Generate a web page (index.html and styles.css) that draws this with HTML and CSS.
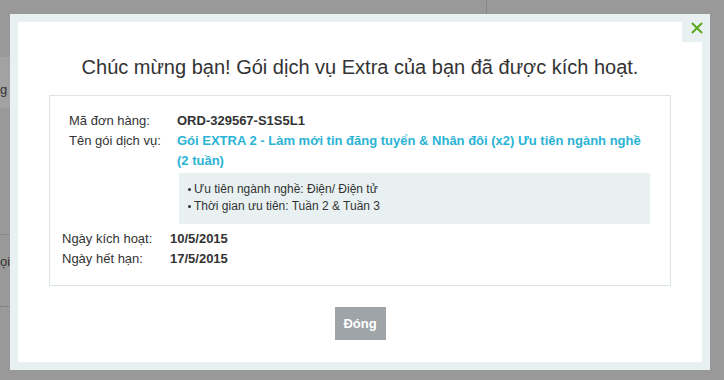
FILE: index.html
```html
<!DOCTYPE html>
<html lang="vi">
<head>
<meta charset="utf-8">
<link rel="stylesheet" href="styles.css">
</head>
<body>
<div class="page">
  <div class="page-tab"><span>g</span></div>
  <div class="page-rule"></div>
  <div class="page-text">ọi</div>
  <div class="page-dots"></div>
  <div class="page-vline"></div>
</div>

<div class="modal">
  <button class="close" aria-label="Đóng">
    <svg width="14" height="14" viewBox="0 0 14 14"><path d="M2 2 L12 12 M12 2 L2 12" stroke="#5aa81c" stroke-width="2" fill="none"/></svg>
  </button>
  <div class="modal-body">
    <h1 class="title">Chúc mừng bạn! Gói dịch vụ Extra của bạn đã được kích hoạt.</h1>
    <div class="info">
      <div class="group group-a">
        <div class="row">
          <div class="label">Mã đơn hàng:</div>
          <div class="value">ORD-329567-S1S5L1</div>
        </div>
        <div class="row">
          <div class="label">Tên gói dịch vụ:</div>
          <div class="value">
            <div class="pkg">Gói EXTRA 2 - Làm mới tin đăng tuyển &amp; Nhân đôi (x2) Ưu tiên ngành nghề (2 tuần)</div>
            <ul class="details">
              <li>Ưu tiên ngành nghề: Điện/ Điện tử</li>
              <li>Thời gian ưu tiên: Tuần 2 &amp; Tuần 3</li>
            </ul>
          </div>
        </div>
      </div>
      <div class="group group-b">
        <div class="row">
          <div class="label">Ngày kích hoạt:</div>
          <div class="value">10/5/2015</div>
        </div>
        <div class="row">
          <div class="label">Ngày hết hạn:</div>
          <div class="value">17/5/2015</div>
        </div>
      </div>
    </div>
    <div class="actions">
      <button class="btn">Đóng</button>
    </div>
  </div>
</div>
</body>
</html>
```

FILE: styles.css
```css
html, body {
  margin: 0;
  padding: 0;
}
body {
  width: 724px;
  height: 380px;
  background: #999999;
  font-family: "Liberation Sans", Arial, sans-serif;
  color: #333;
  position: relative;
  overflow: hidden;
}

/* dimmed page behind the overlay */
.page {
  position: absolute;
  inset: 0;
}
.page-tab {
  position: absolute;
  left: 0;
  top: 57px;
  width: 12px;
  height: 51px;
  background: #a2a2a2;
  font-size: 13px;
  color: #333;
}
.page-tab span {
  position: absolute;
  left: 0;
  top: 25px;
}
.page-rule {
  position: absolute;
  left: 0;
  top: 234px;
  width: 12px;
  height: 1px;
  background: #8a8a8a;
}
.page-text {
  position: absolute;
  left: 0;
  top: 254px;
  width: 10px;
  overflow: hidden;
  font-size: 13px;
  color: #333;
}
.page-dots {
  position: absolute;
  left: 0;
  top: 306px;
  width: 12px;
  border-top: 1px dotted #777;
}
.page-vline {
  position: absolute;
  left: 486px;
  top: 0;
  width: 1px;
  height: 14px;
  background: #888;
}

/* modal */
.modal {
  position: absolute;
  left: 10px;
  top: 14px;
  width: 700px;
  height: 356px;
  box-sizing: border-box;
  border: 8px solid #e8f0f2;
  background: #fff;
}
.close {
  position: absolute;
  right: -8px;
  top: -8px;
  width: 28px;
  height: 28px;
  border: 0;
  padding: 0;
  background: #e8f0f2;
  display: flex;
  align-items: center;
  justify-content: center;
  cursor: pointer;
}
.close svg {
  display: block;
  margin: -1px 0 0 1px;
}
.modal-body {
  padding: 33px 31px 0;
}
.title {
  margin: 0;
  font-size: 20px;
  font-weight: normal;
  line-height: 24px;
  text-align: center;
  color: #333;
}
.info {
  margin-top: 16px;
  border: 1px solid #dbe4e6;
  height: 191px;
  box-sizing: border-box;
  padding: 15px 20px 0 0;
  font-size: 13px;
}
.group-a {
  padding-left: 19px;
}
.group-b {
  padding-left: 12px;
  margin-top: 5px;
}
.row {
  display: flex;
  line-height: 20px;
}
.label {
  width: 108px;
  flex: none;
}
.value {
  flex: 1;
  font-weight: bold;
}
.pkg {
  color: #2ab3d5;
  padding-right: 2px;
}
.details {
  list-style: none;
  margin: 2px 0 0 2px;
  padding: 8px 10px 9px 9px;
  background: #e8f0f2;
  font-weight: normal;
  font-size: 12px;
  line-height: 17px;
}
.details li {
  display: flex;
  align-items: center;
}
.details li::before {
  content: "";
  width: 3px;
  height: 3px;
  border-radius: 50%;
  background: #333;
  margin-right: 3px;
  flex: none;
}
.actions {
  display: flex;
  justify-content: center;
  margin-top: 21px;
}
.btn {
  width: 51px;
  height: 33px;
  border: 0;
  padding: 0;
  background: #9ea4a7;
  color: #fff;
  font-family: "Liberation Sans", Arial, sans-serif;
  font-size: 13px;
  font-weight: bold;
  cursor: pointer;
}
```
